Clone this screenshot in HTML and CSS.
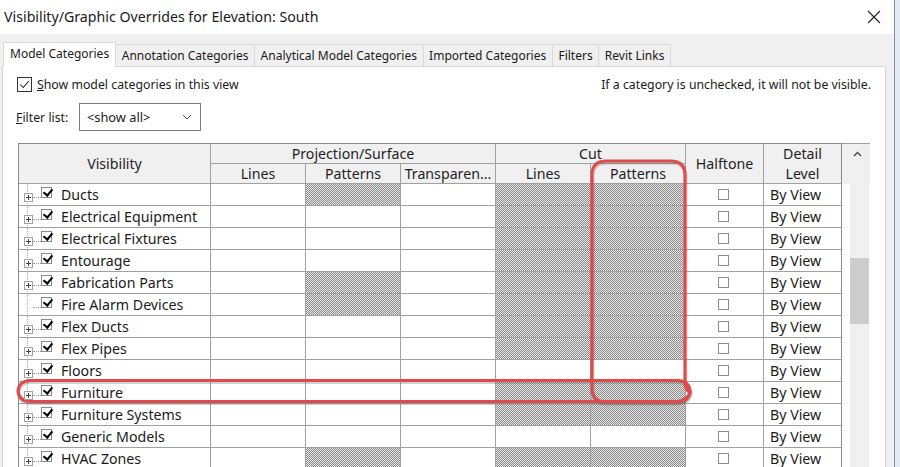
FILE: index.html
```html
<!DOCTYPE html>
<html lang="en">
<head>
<meta charset="utf-8">
<title>Visibility/Graphic Overrides</title>
<link rel="stylesheet" href="styles.css">
</head>
<body>
<div class="window">
  <header class="titlebar">
    <span class="title">Visibility/Graphic Overrides for Elevation: South</span>
    <svg class="close" viewBox="0 0 14 14" width="14" height="14"><path d="M1 1 L13 13 M13 1 L1 13" stroke="#1e1e1e" stroke-width="1.1" fill="none"/></svg>
  </header>

  <div class="dialog-body">
    <nav class="tabs">
      <span class="tab active">Model Categories</span>
      <span class="tab">Annotation Categories</span>
      <span class="tab">Analytical Model Categories</span>
      <span class="tab">Imported Categories</span>
      <span class="tab">Filters</span>
      <span class="tab">Revit Links</span>
    </nav>

    <section class="panel">
      <div class="options">
        <label class="show-check">
          <span class="check-box"><svg viewBox="0 0 15 15" width="13" height="13"><path d="M2.5 7.5 L6 11 L12.5 3.5" stroke="#222" stroke-width="1.2" fill="none"/></svg></span>
          <span><u>S</u>how model categories in this view</span>
        </label>
        <span class="hint">If a category is unchecked, it will not be visible.</span>
      </div>

      <div class="filter-row">
        <span class="filter-label"><u>F</u>ilter list:</span>
        <div class="select">
          <span>&lt;show all&gt;</span>
          <svg viewBox="0 0 10 6" width="10" height="6"><path d="M1 1 L5 5 L9 1" stroke="#555" stroke-width="1" fill="none"/></svg>
        </div>
      </div>

      <div class="grid-wrap">
        <div class="grid">
          <div class="hd span-rows">Visibility</div>
          <div class="hd span-proj">Projection/Surface</div>
          <div class="hd span-cut">Cut</div>
          <div class="hd span-rows">Halftone</div>
          <div class="hd span-rows two-line">Detail<br>Level</div>
          <div class="hd">Lines</div>
          <div class="hd">Patterns</div>
          <div class="hd">Transparen...</div>
          <div class="hd">Lines</div>
          <div class="hd">Patterns</div>

          <div class="cell cat"><span class="exp"></span><span class="twig"></span><span class="tick"></span>Ducts</div>
          <div class="cell"></div><div class="cell hatch"></div><div class="cell"></div><div class="cell hatch"></div><div class="cell hatch"></div>
          <div class="cell half"><span class="cb"></span></div><div class="cell detail">By View</div>

          <div class="cell cat"><span class="exp"></span><span class="twig"></span><span class="tick"></span>Electrical Equipment</div>
          <div class="cell"></div><div class="cell"></div><div class="cell"></div><div class="cell hatch"></div><div class="cell hatch"></div>
          <div class="cell half"><span class="cb"></span></div><div class="cell detail">By View</div>

          <div class="cell cat"><span class="exp"></span><span class="twig"></span><span class="tick"></span>Electrical Fixtures</div>
          <div class="cell"></div><div class="cell"></div><div class="cell"></div><div class="cell hatch"></div><div class="cell hatch"></div>
          <div class="cell half"><span class="cb"></span></div><div class="cell detail">By View</div>

          <div class="cell cat"><span class="exp"></span><span class="twig"></span><span class="tick"></span>Entourage</div>
          <div class="cell"></div><div class="cell"></div><div class="cell"></div><div class="cell hatch"></div><div class="cell hatch"></div>
          <div class="cell half"><span class="cb"></span></div><div class="cell detail">By View</div>

          <div class="cell cat"><span class="exp"></span><span class="twig"></span><span class="tick"></span>Fabrication Parts</div>
          <div class="cell"></div><div class="cell hatch"></div><div class="cell"></div><div class="cell hatch"></div><div class="cell hatch"></div>
          <div class="cell half"><span class="cb"></span></div><div class="cell detail">By View</div>

          <div class="cell cat"><span class="exp leaf"></span><span class="twig"></span><span class="tick"></span>Fire Alarm Devices</div>
          <div class="cell"></div><div class="cell hatch"></div><div class="cell"></div><div class="cell hatch"></div><div class="cell hatch"></div>
          <div class="cell half"><span class="cb"></span></div><div class="cell detail">By View</div>

          <div class="cell cat"><span class="exp"></span><span class="twig"></span><span class="tick"></span>Flex Ducts</div>
          <div class="cell"></div><div class="cell"></div><div class="cell"></div><div class="cell hatch"></div><div class="cell hatch"></div>
          <div class="cell half"><span class="cb"></span></div><div class="cell detail">By View</div>

          <div class="cell cat"><span class="exp"></span><span class="twig"></span><span class="tick"></span>Flex Pipes</div>
          <div class="cell"></div><div class="cell"></div><div class="cell"></div><div class="cell hatch"></div><div class="cell hatch"></div>
          <div class="cell half"><span class="cb"></span></div><div class="cell detail">By View</div>

          <div class="cell cat"><span class="exp"></span><span class="twig"></span><span class="tick"></span>Floors</div>
          <div class="cell"></div><div class="cell"></div><div class="cell"></div><div class="cell"></div><div class="cell"></div>
          <div class="cell half"><span class="cb"></span></div><div class="cell detail">By View</div>

          <div class="cell cat"><span class="exp"></span><span class="twig"></span><span class="tick"></span>Furniture</div>
          <div class="cell"></div><div class="cell"></div><div class="cell"></div><div class="cell hatch"></div><div class="cell hatch"></div>
          <div class="cell half"><span class="cb"></span></div><div class="cell detail">By View</div>

          <div class="cell cat"><span class="exp"></span><span class="twig"></span><span class="tick"></span>Furniture Systems</div>
          <div class="cell"></div><div class="cell"></div><div class="cell"></div><div class="cell hatch"></div><div class="cell hatch"></div>
          <div class="cell half"><span class="cb"></span></div><div class="cell detail">By View</div>

          <div class="cell cat"><span class="exp"></span><span class="twig"></span><span class="tick"></span>Generic Models</div>
          <div class="cell"></div><div class="cell"></div><div class="cell"></div><div class="cell"></div><div class="cell"></div>
          <div class="cell half"><span class="cb"></span></div><div class="cell detail">By View</div>

          <div class="cell cat"><span class="exp"></span><span class="twig"></span><span class="tick"></span>HVAC Zones</div>
          <div class="cell"></div><div class="cell hatch"></div><div class="cell"></div><div class="cell hatch"></div><div class="cell hatch"></div>
          <div class="cell half"><span class="cb"></span></div><div class="cell detail">By View</div>
        </div>

        <div class="vscroll">
          <div class="vs-head">
            <svg viewBox="0 0 9 6" width="9" height="6"><path d="M1 5 L4.5 1.5 L8 5" stroke="#444" stroke-width="1.3" fill="none"/></svg>
          </div>
          <div class="vs-body">
            <div class="vs-track"><div class="vs-thumb"></div></div>
          </div>
        </div>
      </div>
    </section>
  </div>

  <!-- red markup strokes drawn over the grid; the grey copies are their soft shadow -->
  <svg class="marks" viewBox="0 0 900 467" width="900" height="467">
    <g class="mark-shadow" transform="translate(0.5 1.5)">
      <path d="M606 161 L671 161 Q685 161 685 175 L685 384 Q686 390 690 392 Q688 400 676 402 L606 402 Q592 402 592 388 L592 175 Q592 161 606 161 Z" />
      <path d="M30 380.5 L678 380.5 Q689 381 690 391 Q689 401.5 678 401.5 L30 401.5 Q19 401 18 391 Q19 381 30 380.5 Z" />
    </g>
    <g class="mark-line">
      <path d="M606 161 L671 161 Q685 161 685 175 L685 384 Q686 390 690 392 Q688 400 676 402 L606 402 Q592 402 592 388 L592 175 Q592 161 606 161 Z" />
      <path d="M30 380.5 L678 380.5 Q689 381 690 391 Q689 401.5 678 401.5 L30 401.5 Q19 401 18 391 Q19 381 30 380.5 Z" />
    </g>
  </svg>
</div>
</body>
</html>
```

FILE: styles.css
```css
* {
  box-sizing: border-box;
}

html,
body {
  margin: 0;
  padding: 0;
}

html {
  background: #e4eaf1;
}

body {
  width: 900px;
  height: 467px;
  overflow: hidden;
  font-family: "Noto Sans", "Segoe UI", sans-serif;
  color: #1b1b1b;
}

.window {
  position: relative;
  width: 895px;
  height: 467px;
  background: #f0f0f0;
  border-right: 1px solid #7f90a4;
  display: flex;
  flex-direction: column;
}

/* title bar */
.titlebar {
  height: 34px;
  flex: none;
  background: #fff;
  display: flex;
  align-items: center;
  justify-content: space-between;
  padding: 0 13px 1px 4px;
}

.title {
  font-size: 14.2px;
  color: #1a1a1a;
}

.close {
  display: block;
}

/* body with tabs */
.dialog-body {
  flex: 1;
  display: flex;
  flex-direction: column;
  padding: 8px 8px 0 2px;
  min-height: 0;
}

.tabs {
  display: flex;
  align-items: flex-end;
  height: 24px;
  padding-left: 2px;
  position: relative;
  z-index: 1;
}

.tab {
  height: 22px;
  padding: 0 5.6px;
  margin-left: -1px;
  border: 1px solid #d9d9d9;
  border-bottom: none;
  background: #f0f0f0;
  font-size: 12px;
  line-height: 21px;
  color: #1a1a1a;
  white-space: nowrap;
}

.tab.active {
  height: 25px;
  margin-bottom: -1px;
  padding: 0 6px;
  background: #fff;
  line-height: 22px;
}

.panel {
  flex: 1;
  min-height: 0;
  background: #fff;
  border: 1px solid #d9d9d9;
  border-bottom: none;
  padding: 9px 14px 0 15px;
  font-size: 12.3px;
}

/* options */
.options {
  display: flex;
  justify-content: space-between;
  align-items: center;
  height: 16px;
}

.show-check {
  display: flex;
  align-items: center;
  gap: 5px;
  margin-left: -1px;
}

.check-box {
  width: 15px;
  height: 15px;
  border: 1px solid #333;
  display: flex;
  align-items: center;
  justify-content: center;
}

.check-box svg {
  display: block;
}

.hint {
  color: #1a1a1a;
}

.filter-row {
  display: flex;
  align-items: center;
  margin-top: 11px;
  height: 28px;
}

.filter-label {
  width: 63px;
  margin-left: -2px;
}

.select {
  width: 122px;
  height: 28px;
  border: 1px solid #7a7a7a;
  display: flex;
  align-items: center;
  justify-content: space-between;
  padding: 0 8px 0 7px;
  font-size: 12.8px;
}

/* category grid */
.grid-wrap {
  display: flex;
  margin-top: 12px;
}

.grid {
  display: grid;
  grid-template-columns: 192px 95px 95px 95px 95px 95px 78px 78px;
  grid-template-rows: 20px 20px repeat(13, 22px);
  border-left: 1px solid #8a8a8a;
  border-top: 1px solid #8a8a8a;
  font-size: 14.2px;
}

.hd,
.cell {
  border-right: 1px solid #a0a0a0;
  border-bottom: 1px solid #a0a0a0;
}

.hd {
  background: #f0f0f0;
  display: flex;
  align-items: center;
  justify-content: center;
  line-height: 19px;
  color: #1e1e1e;
  white-space: nowrap;
}

.span-rows {
  grid-row: span 2;
}

.span-proj {
  grid-column: span 3;
}

.span-cut {
  grid-column: span 2;
}

.two-line {
  text-align: center;
  line-height: 20px;
}

.cell {
  background-color: #fff;
}

.grid > .hd:nth-child(5) {
  border-right-color: #8a8a8a;
}

.cell.detail {
  border-right-color: #8a8a8a;
  padding-left: 6px;
  line-height: 21px;
  color: #1a1a1a;
}

/* unavailable override: fine grey checker */
.cell.hatch {
  background-color: #e8e8e8;
  background-image:
    linear-gradient(45deg, #8a8a8a 25%, transparent 25%, transparent 75%, #8a8a8a 75%),
    linear-gradient(45deg, #8a8a8a 25%, transparent 25%, transparent 75%, #8a8a8a 75%);
  background-size: 2px 2px;
  background-position: 0 0, 1px 1px;
}

.cat {
  position: relative;
  display: flex;
  align-items: center;
  padding-left: 5px;
  line-height: 21px;
  white-space: nowrap;
}

/* dotted tree connector */
.cat::before {
  content: "";
  position: absolute;
  left: 8px;
  top: 0;
  bottom: -1px;
  border-left: 1px dotted #b0b0b0;
}

.exp {
  position: relative;
  z-index: 1;
  flex: none;
  width: 9px;
  height: 9px;
  margin-top: 5px;
  border: 1px solid #a3a3a3;
  background: #fff;
}

.exp::before,
.exp::after {
  content: "";
  position: absolute;
  background: #444;
}

.exp::before {
  left: 1px;
  top: 3px;
  width: 5px;
  height: 1px;
}

.exp::after {
  left: 3px;
  top: 1px;
  width: 1px;
  height: 5px;
}

.exp.leaf {
  border-color: transparent;
  background: transparent;
}

.exp.leaf::before,
.exp.leaf::after {
  display: none;
}

.twig {
  flex: none;
  width: 8px;
  margin-top: 5px;
  border-top: 1px dotted #9a9a9a;
}

.tick {
  position: relative;
  flex: none;
  width: 11px;
  height: 11px;
  margin-top: -5px;
  margin-right: 9px;
  border: 1px solid #8a8a8a;
  background: #fff;
}

.tick::after {
  content: "";
  position: absolute;
  left: 3px;
  top: -1px;
  width: 4px;
  height: 7px;
  border: solid #000;
  border-width: 0 2px 2px 0;
  transform: rotate(40deg);
}

.half {
  display: flex;
  justify-content: center;
  align-items: flex-start;
  padding-top: 5px;
}

.cb {
  width: 11px;
  height: 11px;
  border: 1px solid #8c8c8c;
  margin-left: -2px;
}

/* vertical scrollbar */
.vscroll {
  width: 28px;
  display: flex;
  flex-direction: column;
}

.vs-head {
  height: 41px;
  background: #f0f0f0;
  border-top: 1px solid #a0a0a0;
  display: flex;
  justify-content: center;
  padding: 7px 0 0 3px;
}

.vs-head svg {
  display: block;
}

.vs-body {
  flex: 1;
  padding-left: 8px;
  background: #fff;
}

.vs-track {
  width: 19px;
  height: 100%;
  background: #f0f0f0;
  padding-top: 74px;
}

.vs-thumb {
  height: 66px;
  background: #cdcdcd;
}

/* markup overlay */
.marks {
  position: absolute;
  left: 0;
  top: 0;
  pointer-events: none;
  fill: none;
}

.mark-shadow {
  stroke: rgba(90, 90, 90, 0.28);
  stroke-width: 4;
}

.mark-line {
  stroke: #df4b4b;
  stroke-width: 3;
}
```
